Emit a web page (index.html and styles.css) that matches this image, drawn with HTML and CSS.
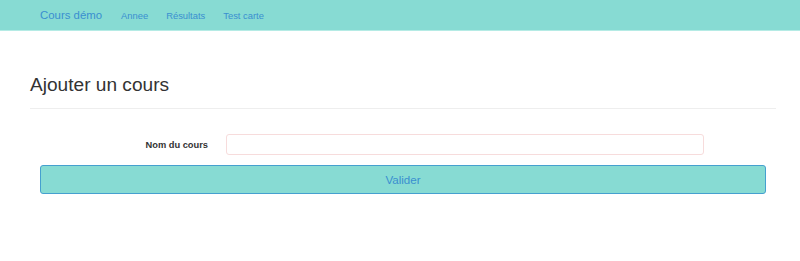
FILE: index.html
```html
<!DOCTYPE html>
<html lang="fr">
<head>
    <meta charset="UTF-8">
    <meta name="viewport" content="width=device-width, initial-scale=1.0">
    <title>Ajouter un cours</title>
    <link rel="stylesheet" href="styles.css">
</head>
<body>
    <nav class="navbar">
        <a class="brand" href="#">Cours démo</a>
        <a class="nav-link" href="#">Annee</a>
        <a class="nav-link" href="#">Résultats</a>
        <a class="nav-link" href="#">Test carte</a>
    </nav>

    <div class="container">
        <div class="page-header">
            <h1>Ajouter un cours</h1>
        </div>

        <form class="course-form">
            <div class="form-row">
                <label for="nom">Nom du cours</label>
                <input type="text" id="nom" name="nom">
            </div>
            <button type="submit" class="btn-valider">Valider</button>
        </form>
    </div>
</body>
</html>
```

FILE: styles.css
```css
body {
    margin: 0;
    font-family: 'Liberation Sans', Arial, sans-serif;
    font-size: 9px;
    color: #333;
    background-color: #fff;
}
.navbar {
    display: flex;
    align-items: center;
    height: 30px;
    padding-left: 40px;
    background-color: #87dbd3;
    border-bottom: 1px solid #b5ebe5;
}
.navbar a {
    color: #3a8fd0;
    text-decoration: none;
}
.brand {
    font-size: 11.4px;
    margin-right: 19px;
}
.nav-link {
    font-size: 9.4px;
    margin-right: 18px;
}
.container {
    width: 746px;
    margin-left: 30px;
}
.page-header {
    margin-top: 43px;
    padding-bottom: 13px;
    border-bottom: 1px solid #eee;
}
.page-header h1 {
    margin: 0;
    font-size: 19.1px;
    font-weight: normal;
    line-height: 1.1;
}
.course-form {
    padding: 0 10px;
    margin-top: 25px;
}
.form-row {
    display: grid;
    grid-template-columns: 168px 478px;
    column-gap: 18px;
    align-items: center;
}
.form-row label {
    text-align: right;
    font-weight: bold;
    font-size: 9.3px;
}
.form-row input {
    box-sizing: border-box;
    height: 21px;
    border: 1px solid #f7dcdc;
    border-radius: 3px;
    padding: 0 8px;
}
.btn-valider {
    display: block;
    box-sizing: border-box;
    width: 100%;
    height: 29px;
    margin-top: 10px;
    background-color: #87dbd3;
    border: 1px solid #45a0cf;
    border-radius: 3px;
    color: #3a8fd0;
    font-family: 'Liberation Sans', Arial, sans-serif;
    font-size: 11.6px;
}
```
